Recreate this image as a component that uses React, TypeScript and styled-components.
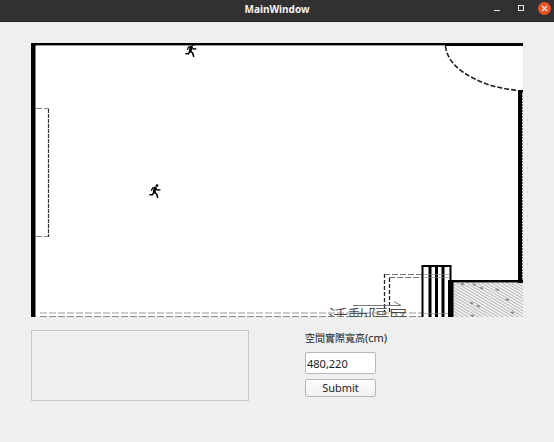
import React, { useState } from 'react';
import styled, { createGlobalStyle } from 'styled-components';

const GlobalStyle = createGlobalStyle`
  * { box-sizing: border-box; }
  body { margin: 0; background: #efefef; }
`;

const Window = styled.div`
  min-height: 100vh;
  display: flex;
  flex-direction: column;
  background: #efefef;
  color: #1c1c1c;
  font: 11px/16px "Noto Sans", "Noto Sans CJK TC", sans-serif;
`;

const TitleBar = styled.header`
  height: 22px;
  display: grid;
  grid-template-columns: 1fr auto 1fr;
  align-items: center;
  padding: 0 3px 4px;
  background: #323031;
  border-bottom: 1px solid #262425;
`;

const Title = styled.h1`
  grid-column: 2;
  margin: 0;
  color: #f4f4f4;
  font-size: 10px;
  line-height: 16px;
  font-weight: 700;
`;

const WindowButtons = styled.div`
  display: flex;
  justify-content: flex-end;
  align-items: center;
  gap: 11px;
`;

const WindowButton = styled.button<{ $close?: boolean }>`
  width: 13px;
  height: 13px;
  padding: 0;
  border: 0;
  border-radius: 50%;
  background: ${(p) => (p.$close ? '#e95420' : 'transparent')};
  color: #e8e8e8;

  svg { display: block; }
`;

const Content = styled.main`
  display: flex;
  flex-direction: column;
  gap: 13px;
  padding: 21px 31px;
`;

const Plan = styled.svg`
  display: block;
  width: 100%;
  height: auto;
  background: #fff;
`;

const PlanText = styled.text`
  font: 300 20px "Noto Sans CJK TC", sans-serif;
  fill: #444;
`;

const Lower = styled.div`
  display: grid;
  grid-template-columns: 1fr 1fr;
  gap: 56px;
`;

const OutputPanel = styled.section`
  min-height: 71px;
  border: 1px solid #c6c6c6;
`;

const SizeForm = styled.form`
  display: flex;
  flex-direction: column;
  align-items: flex-start;
`;

const Label = styled.label`
  margin-bottom: 6px;
  font-size: 10px;
  line-height: 16px;
  white-space: nowrap;
`;

const Unit = styled.span`
  font-size: 11px;
`;

const SizeInput = styled.input`
  width: 71px;
  height: 22px;
  margin-bottom: 5px;
  padding: 0 1px;
  border: 1px solid #b8b8b8;
  border-radius: 2px;
  background: #fff;
  color: inherit;
  font: inherit;
`;

const SubmitButton = styled.button`
  width: 71px;
  height: 18px;
  padding: 0;
  border: 1px solid #b8b8b8;
  border-radius: 2px;
  background: linear-gradient(#fdfdfd, #f1f1f1);
  color: inherit;
  font: inherit;
  line-height: 14px;
`;

function Runner({ x, y }: { x: number; y: number }) {
  return (
    <g transform={`translate(${x} ${y})`} fill="none" stroke="#000" strokeLinecap="round" strokeLinejoin="round">
      <circle cx="8" cy="1.6" r="1.4" fill="#000" stroke="none" />
      <path d="M6.2 4L5.2 8" strokeWidth="2.8" />
      <path d="M6 3.6L3.4 4.2 2.6 6.4M6.8 4L8.2 6 11 5.8" strokeWidth="1.3" />
      <path d="M4.8 8.4L3.6 10.6 1 10.8M5.4 8L7.6 10 8.6 13.2" strokeWidth="1.6" />
    </g>
  );
}

const stones = [
  [462, 284.5], [474, 285], [481, 288.5], [497, 290], [507, 300],
  [471, 303.5], [478, 306.5], [512, 313], [472, 316],
];

function FloorPlan() {
  return (
    <Plan viewBox="31 43 492 274" role="img" aria-label="Floor plan">
      <defs>
        <pattern id="hatch" width="5" height="3" patternUnits="userSpaceOnUse">
          <path d="M-5 -3L10 6M-5 0L5 6M0 -3L10 3" stroke="#999" strokeWidth=".7" />
        </pattern>
      </defs>

      <rect x="452" y="283" width="71" height="34" fill="#f1f1f1" />
      <rect x="452" y="283" width="71" height="34" fill="url(#hatch)" />
      {stones.map(([x, y]) => (
        <path key={`${x}-${y}`} d={`M${x - 2} ${y - 1}l3-.5 1.5 1.5-2 1z`} fill="#888" />
      ))}

      <g fill="none" stroke="#555" strokeWidth="1">
        <path d="M36 108.5H49M36 236.5H49" stroke="#888" strokeDasharray="6 2" />
        <path d="M48.5 109V237" stroke="#333" strokeWidth="1.2" strokeDasharray="4 1" />
        <path d="M40 313H422" stroke="#bbb" strokeWidth="1.6" strokeDasharray="7 2" />
        <path d="M40 316.5H422" stroke="#888" strokeDasharray="7 2" />
        <path d="M384 274.5H422M389 277.5H422" stroke="#777" strokeDasharray="6 2" />
        <path d="M384.5 274V312M389.5 278V312" stroke="#222" strokeWidth="1.3" strokeDasharray="4 2" />
        <path d="M353 305.5H401L394 301.5" stroke="#777" />
        <path d="M522.5 92V283" stroke="#777" strokeDasharray="2 1" />
        <path d="M445.5 46C447 60 458 71 475 79C488 86 504 89 518 90.5" stroke="#222" strokeWidth="1.6" strokeDasharray="5 2" />
      </g>

      <PlanText x="328" y="325">活動隔屏</PlanText>

      <rect x="422" y="266" width="29" height="51" fill="#fff" />
      <g fill="none" stroke="#000">
        <path d="M421.5 266H451.5" strokeWidth="2" />
        <path d="M422.5 266V317M450.5 266V282" strokeWidth="2" />
        <path d="M430 266V317M436.5 266V317M443 266V317" strokeWidth="3" />
      </g>
      <g stroke="#888" strokeWidth=".6">
        <path d="M424 274.5H450M424 277.5H450M424 313.5H450" />
      </g>

      <g fill="#000">
        <rect x="31" y="43" width="492" height="2.4" />
        <rect x="445" y="43" width="78" height="3" />
        <rect x="31" y="43" width="4.5" height="274" />
        <rect x="518" y="90" width="4" height="193" />
        <rect x="518" y="90" width="5" height="2" />
        <rect x="448" y="280" width="75" height="2.5" />
        <rect x="448" y="280" width="5.5" height="37" />
      </g>

      <Runner x={185} y={43} />
      <Runner x={149} y={184} />
    </Plan>
  );
}

export default function App() {
  const [size, setSize] = useState('480,220');

  return (
    <Window>
      <GlobalStyle />
      <TitleBar>
        <Title>MainWindow</Title>
        <WindowButtons>
          <WindowButton type="button" aria-label="Minimize">
            <svg width="13" height="13"><path d="M4 8.5H10" stroke="currentColor" /></svg>
          </WindowButton>
          <WindowButton type="button" aria-label="Maximize">
            <svg width="13" height="13"><rect x="4.5" y="3.5" width="5" height="5" fill="none" stroke="currentColor" /></svg>
          </WindowButton>
          <WindowButton type="button" aria-label="Close" $close>
            <svg width="13" height="13"><path d="M4 4L9 9M9 4L4 9" stroke="currentColor" strokeWidth="1.2" /></svg>
          </WindowButton>
        </WindowButtons>
      </TitleBar>
      <Content>
        <FloorPlan />
        <Lower>
          <OutputPanel aria-label="Output" />
          <SizeForm onSubmit={(e: React.FormEvent) => e.preventDefault()}>
            <Label htmlFor="room-size">空間實際寬高<Unit>(cm)</Unit></Label>
            <SizeInput id="room-size" value={size} onChange={(e) => setSize(e.target.value)} />
            <SubmitButton type="submit">Submit</SubmitButton>
          </SizeForm>
        </Lower>
      </Content>
    </Window>
  );
}
